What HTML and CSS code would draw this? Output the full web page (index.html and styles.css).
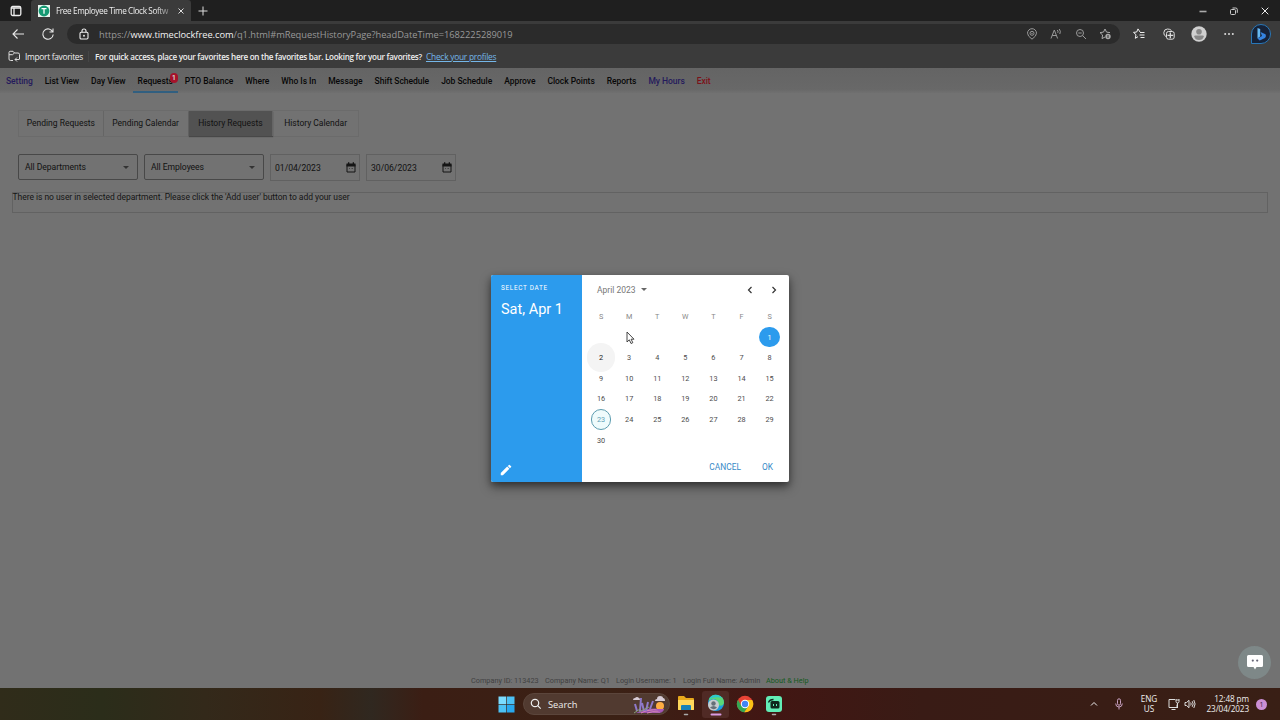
FILE: index.html
```html
<!DOCTYPE html>
<html lang="en">
<head>
  <meta charset="UTF-8" />
  <meta name="viewport" content="width=device-width, initial-scale=1.0"/>
  <title>Free Employee Time Clock Software</title>
  <link rel="stylesheet" href="styles.css">
</head>
<body>
  <!-- Browser -->
  <header class="browser">
    <div class="tabs">
      <svg class="tab-menu" width="12" height="12" viewBox="0 0 12 12" fill="none" stroke="#eee" stroke-width="1.3"><rect x="1.2" y="1.5" width="9.6" height="9" rx="1.5"/><path d="M1 3h10M4 3v7"/></svg>
      <div class="tab">
        <span class="favicon"><svg width="12" height="12" viewBox="0 0 12 12"><circle cx="6" cy="6" r="5.4" fill="#159a73"/><path d="M3.5 3.7h5M6 3.7v5" stroke="#fff" stroke-width="1.3"/></svg></span>
        <span class="tab-title">Free Employee Time Clock Softw</span>
        <svg class="tab-close" width="8" height="8" viewBox="0 0 8 8" stroke="#ddd" stroke-width="1"><path d="M1.5 1.5l5 5M6.5 1.5l-5 5"/></svg>
      </div>
      <svg class="new-tab" width="12" height="12" viewBox="0 0 12 12" stroke="#ddd" stroke-width="1"><path d="M1.5 6h9M6 1.5v9"/></svg>
      <div class="window-btns">
        <svg width="10" height="10" viewBox="0 0 10 10"><path d="M1.5 5.500h7" stroke="#aaa" stroke-width="1.6"/></svg>
        <svg width="10" height="10" viewBox="0 0 10 10" fill="none" stroke="#ccc"><rect x="1.5" y="3.5" width="5" height="5" rx="1"/><path d="M3.5 2h3.2q1.6 0 1.6 1.6v3.2"/></svg>
        <svg width="10" height="10" viewBox="0 0 10 10" stroke="#eee"><path d="M1.7 1.7l6.6 6.6M8.3 1.7l-6.6 6.6"/></svg>
      </div>
    </div>

    <div class="toolbar">
      <svg class="back" width="14" height="14" viewBox="0 0 14 14" fill="none" stroke="#e8e8e8" stroke-width="1.1"><path d="M13 7H2M6.5 2.5L2 7l4.500 4.500"/></svg>
      <svg class="reload" width="14" height="14" viewBox="0 0 14 14" fill="none" stroke="#e8e8e8" stroke-width="1.1"><path d="M11.8 5A5.200 5.200 0 1 0 12.200 7.500M12 1.500V5H8.500"/></svg>
      <div class="address">
        <svg class="lock" width="10" height="12" viewBox="0 0 10 12" fill="none" stroke="#eee" stroke-width="1.1"><rect x="1" y="4.300" width="8" height="6.700" rx="1.200"/><path d="M3 4.300V3a2 2 0 0 1 4 0v1.300"/><circle cx="5" cy="7.700" r=".4"/></svg>
        <span class="url">https://<b>www.timeclockfree.com</b>/q1.html#mRequestHistoryPage?headDateTime=1682225289019</span>
        <div class="address-icons">
          <svg width="12" height="12" viewBox="0 0 12 12" fill="none" stroke="#999"><path d="M6 11.200Q1.500 8 1.500 5.200a4.500 4.500 0 0 1 9 0Q10.500 8 6 11.200z"/><circle cx="6" cy="5.300" r="2"/><circle cx="6" cy="5.300" r=".3"/></svg>
          <svg width="12" height="12" viewBox="0 0 12 12" fill="none" stroke="#999"><path d="M1 10.500L4.300 2l3.300 8.500M2.200 7.500h4.200M7.300 2q1.200 1.200.5 2.800M9.200 1q2 2.200.6 5"/></svg>
          <svg width="12" height="12" viewBox="0 0 12 12" fill="none" stroke="#999"><circle cx="5" cy="5" r="3.500"/><path d="M7.600 7.600l3.400 3.400M3.300 5h3.400"/></svg>
          <svg width="12" height="12" viewBox="0 0 12 12" fill="none" stroke="#aaa"><path d="M6 9l-3 1.600.6-3.600L1 4.600l3.500-.5L6 1l1.500 3.100 3.500.5"/><circle cx="9" cy="8.500" r="2.700" fill="#aaa" stroke="none"/><path d="M9 7v3" stroke="#333"/></svg>
        </div>
      </div>
      <div class="toolbar-icons">
        <svg width="12" height="12" viewBox="0 0 12 12" fill="none" stroke="#eee"><path d="M7 4L5 .9 3.700 4l-3.200.4L3 6.700l-.7 3.600L5 8.700M7 4.500h4.500M6.500 7h5M7.500 9.500h4"/></svg>
        <svg width="12" height="12" viewBox="0 0 12 12" fill="none" stroke="#ddd"><path d="M3 8.500Q.7 7.500.8 4.700 1 1 4.500 1 7 1 8.500 2.500"/><rect x="3.500" y="3.500" width="7.700" height="7.700" rx="2"/><path d="M7.300 4.500v5.700M4.500 7.300h5.700" stroke-width="1.300"/></svg>
        <svg class="profile" width="16" height="16" viewBox="0 0 16 16"><circle cx="8" cy="8" r="7.700" fill="#d0d0d0"/><circle cx="8" cy="5.800" r="2.800" fill="#888"/><path d="M3.200 10.500q0-1 1-1h7.600q1 0 1 1-1 3.500-4.800 3.500T3.200 10.500z" fill="#888"/></svg>
        <svg class="more" width="12" height="12" viewBox="0 0 12 12" fill="#ddd"><circle cx="2.200" cy="6" r="1"/><circle cx="6" cy="6" r="1"/><circle cx="9.800" cy="6" r="1"/></svg>
        <svg class="bing" width="22" height="22" viewBox="0 0 22 22"><path d="M1.500 20.500V11A9.500 9.500 0 1 1 11 20.500z" fill="#162238" stroke="#2877b8"/><path d="M7.500 5l2.700 1v7.500l-2.700 2z" fill="#66b8f2"/><path d="M10.500 9l5 2.200q1.200 2.500-1 4L9.700 17.500l-2.200-2L12 13z" fill="#3583e0"/></svg>
      </div>
    </div>

    <div class="favorites">
      <svg width="13" height="12" viewBox="0 0 13 12" fill="none" stroke="#ddd"><path d="M5 10.500H2.500q-1.500 0-1.500-1.500V2.500Q1 1.300 2.200 1.300H5L6.500 3H10q1.500 0 1.500 1.500V9M1 4.700h3.500L6.500 3M11.500 9.500H7M9 7.500l-2 2 2 2"/></svg>
      <span class="import">Import favorites</span>
      <span class="hint">For quick access, place your favorites here on the favorites bar. Looking for your favorites?</span>
      <a href="#" class="profiles">Check your profiles</a>
    </div>
  </header>

  <!-- Time clock page -->
  <nav class="menu">
    <a class="blue">Setting</a>
    <a>List View</a>
    <a>Day View</a>
    <a class="active">Requests<span class="badge">1</span></a>
    <a>PTO Balance</a>
    <a>Where</a>
    <a>Who Is In</a>
    <a>Message</a>
    <a>Shift Schedule</a>
    <a>Job Schedule</a>
    <a>Approve</a>
    <a>Clock Points</a>
    <a>Reports</a>
    <a class="blue">My Hours</a>
    <a class="red">Exit</a>
  </nav>

  <main class="page">
    <div class="subtabs">
      <span>Pending Requests</span>
      <span>Pending Calendar</span>
      <span class="selected">History Requests</span>
      <span>History Calendar</span>
    </div>

    <div class="filters">
      <div class="select">All Departments<i></i></div>
      <div class="select">All Employees<i></i></div>
      <div class="date">01/04/2023<svg width="10" height="11" viewBox="0 0 10 11"><path d="M1 2.500h8v7.500H1z" fill="none" stroke="#151515"/><path d="M.5 1.500h9v3h-9zM2 .3h1.300v2H2zM6.700.3H8v2H6.700z" fill="#151515"/><path d="M3 6.500h1M5.500 6.500h1.500" stroke="#444"/></svg></div>
      <div class="date">30/06/2023<svg width="10" height="11" viewBox="0 0 10 11"><path d="M1 2.500h8v7.500H1z" fill="none" stroke="#151515"/><path d="M.5 1.500h9v3h-9zM2 .3h1.300v2H2zM6.700.3H8v2H6.700z" fill="#151515"/><path d="M3 6.500h1M5.500 6.500h1.500" stroke="#444"/></svg></div>
    </div>

    <div class="notice">There is no user in selected department. Please click the 'Add user' button to add your user</div>

    <footer class="company">
      <span class="c-id">Company ID: 113423</span>
      <span class="c-name">Company Name: Q1</span>
      <span class="c-user">Login Username: 1</span>
      <span class="c-full">Login Full Name: Admin</span>
      <span class="about">About &amp; Help</span>
    </footer>
  </main>

  <!-- Date picker -->
  <div class="picker">
    <div class="picker-side">
      <small>SELECT DATE</small>
      <h1>Sat, Apr 1</h1>
      <svg class="pencil" width="14" height="14" viewBox="0 0 24 24" fill="#fff"><path d="M3 17.250V21h3.750L17.810 9.940l-3.750-3.750L3 17.250zM20.710 7.040a1 1 0 0 0 0-1.410l-2.340-2.340a1 1 0 0 0-1.410 0l-1.830 1.830 3.750 3.750 1.830-1.830z"/></svg>
    </div>
    <div class="picker-main">
      <div class="month">
        <span>April 2023</span><i></i>
        <svg width="10" height="10" viewBox="0 0 10 10" fill="none" stroke="#333" stroke-width="1.200"><path d="M6.500 2L3.500 5l3 3"/></svg>
        <svg width="10" height="10" viewBox="0 0 10 10" fill="none" stroke="#333" stroke-width="1.200"><path d="M3.500 2l3 3-3 3"/></svg>
      </div>
      <div class="week"><span>S</span><span>M</span><span>T</span><span>W</span><span>T</span><span>F</span><span>S</span></div>
      <div class="days" id="days"></div>
      <div class="actions"><span>CANCEL</span><span>OK</span></div>
    </div>
  </div>

  <svg class="cursor" width="9" height="14" viewBox="0 0 9 14"><path d="M1 1v10l2.300-2.200L5 12.500l1.800-.8-1.700-3.500H8z" fill="#fff" stroke="#333" stroke-width=".9"/></svg>

  <div class="chat">
    <svg width="18" height="17" viewBox="0 0 18 17"><path d="M2.500 1h13Q17 1 17 2.500v9q0 1.500-1.500 1.500h-5L9 15.500 7.500 13h-5Q1 13 1 11.500v-9Q1 1 2.500 1z" fill="#fff"/><circle cx="6.800" cy="6.600" r="1.100" fill="#667"/><circle cx="11.200" cy="6.600" r="1.100" fill="#667"/></svg>
  </div>

  <!-- Taskbar -->
  <div class="taskbar">
    <div class="apps">
      <svg class="start" width="17" height="17" viewBox="0 0 17 17" fill="#4cc2f5"><rect x=".5" y=".5" width="7.700" height="7.700" fill="#7bdcff"/><rect x="8.800" y=".5" width="7.700" height="7.700"/><rect x=".5" y="8.800" width="7.700" height="7.700"/><rect x="8.800" y="8.800" width="7.700" height="7.700" fill="#28a8ee"/></svg>
      <div class="search">
        <svg width="12" height="12" viewBox="0 0 12 12" fill="none" stroke="#eee" stroke-width="1.200"><circle cx="5" cy="5" r="3.700"/><path d="M7.700 7.700l3 3"/></svg>
        <span>Search</span>
        <svg class="flowers" width="34" height="19" viewBox="0 0 34 19">
          <path d="M4 18q9-6 28-4-1 4-5 4z" fill="#9450ad"/><path d="M9 18q7-4 18-3M15 18q5-2 13-1" stroke="#dd8bb8" fill="none"/>
          <circle cx="28" cy="11" r="4" fill="#ffad42"/><path d="M24 14h8q-1 3-5 3z" fill="#a858b8"/>
          <path d="M23 6q0-2 2-2 0-3 3-3t3 2q2 0 2 3zM1 5q0-2 2-2 2-2 4 0 1 0 1 2z" fill="#d8ccd6"/>
          <path d="M5 16L3 9M8 16l1-13M12 16L10 8M14 16l2-9M18 14l3-8" stroke="#8e79c9" stroke-width="2"/>
          <path d="M2 18l6-4M7 17l10-5" stroke="#8aa17b"/>
        </svg>
      </div>
      <svg class="folder" width="18" height="24" viewBox="0 0 18 24"><path d="M1 5q0-1 1-1h5l2 2h7q1 0 1 1v11H1z" fill="#e8a91c"/><path d="M1 8h16v9q0 1-1 1H2q-1 0-1-1z" fill="#ffd75b"/><path d="M4 14q0-1 1-1h8q1 0 1 1v4H4z" fill="#1681b8"/><path d="M7.500 22.500h3" stroke="#aaa" stroke-width="1.500" stroke-linecap="round"/></svg>
      <div class="edge">
        <svg width="18" height="24" viewBox="0 0 18 24"><circle cx="9" cy="11" r="8" fill="#1b9de0"/><path d="M2 7q3-5 8-4 7 1 7 8-1 4-6 2 1-5-4-6-3 0-5 2z" fill="#5bd778"/><path d="M2 7q3-5 9-4 3 1 4 3Q9 4 2 7z" fill="#2ec8cd"/><circle cx="6.500" cy="13" r="5.500" fill="#c6cccf"/><circle cx="6.500" cy="11.500" r="2.200" fill="#667078"/><path d="M3 15.500q3.500-3 7 0-3 3.500-7 0z" fill="#667078"/><path d="M4.500 22.500h9" stroke="#d99be3" stroke-width="2" stroke-linecap="round"/></svg>
      </div>
      <svg class="chrome" width="18" height="18" viewBox="0 0 18 18"><circle cx="9" cy="9" r="8.200" fill="#e94335"/><path d="M2 4.800A8.200 8.200 0 0 0 8.500 17.200L12.500 11 5.500 11z" fill="#34a853"/><path d="M9 5h7.200A8.200 8.200 0 0 1 8.300 17.200L12.500 11z" fill="#fbc116"/><circle cx="9" cy="9" r="4.200" fill="#fff"/><circle cx="9" cy="9" r="3.200" fill="#4285f4"/></svg>
      <svg class="robot" width="18" height="24" viewBox="0 0 18 24"><rect x="1" y="4" width="16" height="16" rx="3" fill="#62edb6"/><rect x="5.500" y="9" width="9" height="7.500" rx="1.500" fill="#10271f"/><path d="M3.500 10.500q1-3 5-3" fill="none" stroke="#10271f" stroke-width="1.300"/><path d="M8.500 12v2M11.500 12v2" stroke="#62edb6"/><path d="M7.500 22.500h3" stroke="#aaa" stroke-width="1.500" stroke-linecap="round"/></svg>
    </div>
    <div class="tray">
      <svg width="8" height="8" viewBox="0 0 8 8" fill="none" stroke="#eee"><path d="M1 5.500l3-3 3 3"/></svg>
      <svg class="mic" width="8" height="12" viewBox="0 0 8 12" fill="none" stroke="#c7a0c0"><rect x="2.500" y=".8" width="3" height="6.400" rx="1.500"/><path d="M.7 5.500q0 3.500 3.300 3.500t3.300-3.500M4 9v2.500"/></svg>
      <div class="lang">ENG<br>US</div>
      <svg class="net" width="12" height="12" viewBox="0 0 12 12" fill="none" stroke="#ddd"><path d="M7 1.500H1v8h8V6.500M3.500 11.500h4M8 1v2.500q0 1.500 1.500 1.500T11 3.500V1M8 2h3M9.500 5v5"/></svg>
      <svg class="sound" width="12" height="12" viewBox="0 0 12 12" fill="none" stroke="#ddd"><path d="M1 4.500v3h1.500L5 9.700V2.300L2.500 4.500zM6.700 4.500q1 1.500 0 3M8.200 3.200q2 2.800 0 5.600M9.800 2q2.600 4 0 8"/></svg>
      <div class="clock">12:48 pm<br>23/04/2023</div>
      <span class="count">1</span>
    </div>
  </div>

  <script>
    // April 2023 starts on a Saturday
    const days = document.getElementById('days');

    for (let i = 1; i <= 30; i++) {
      const day = document.createElement('span');
      day.textContent = i;
      if (i === 1) day.classList.add('first', 'picked');
      if (i === 2) day.classList.add('hovered');
      if (i === 23) day.classList.add('today');
      days.appendChild(day);
    }
  </script>
</body>
</html>
```

FILE: styles.css
```css
* {
  margin: 0;
  padding: 0;
  box-sizing: border-box;
}

body {
  width: 1280px;
  height: 720px;
  overflow: hidden;
  position: relative;
  display: flex;
  flex-direction: column;
  background: #727272;
  color: #111;
  font-family: Roboto, sans-serif;
}

svg {
  display: block;
  flex-shrink: 0;
}

span, a, div {
  white-space: nowrap;
}

/* Browser */
.browser {
  height: 68px;
  background: #3b3b3b;
  color: #eee;
  font-family: "Open Sans", "Noto Sans", sans-serif;
}

.tabs {
  height: 21px;
  background: #1f1f1f;
  display: flex;
  align-items: center;
}

.tab-menu {
  margin-left: 10px;
}

.tab {
  width: 160px;
  height: 21px;
  margin-left: 9px;
  padding-left: 7px;
  display: flex;
  align-items: center;
  background: #3b3b3b;
  border-radius: 3px 3px 0 0;
}

.favicon {
  background: #e8f5ef;
}

.tab-title {
  width: 117px;
  margin-left: 6px;
  font-size: 8.2px;
  letter-spacing: -0.38px;
  -webkit-mask-image: linear-gradient(90deg, #000 85%, rgba(0, 0, 0, 0.2));
}

.tab-close {
  margin-left: 4px;
}

.new-tab {
  margin-left: 6px;
}

.window-btns {
  display: flex;
  gap: 21px;
  margin-left: auto;
  margin-right: 10px;
}

.toolbar {
  height: 26px;
  display: flex;
  align-items: center;
}

.back {
  margin-left: 11px;
}

.reload {
  margin-left: 16px;
}

.address {
  width: 1053px;
  height: 20px;
  margin-left: 12px;
  padding: 0 9px 0 12px;
  display: flex;
  align-items: center;
  background: #2b2b2b;
  border-radius: 10px;
}

.url {
  margin-left: 10px;
  font-size: 9.3px;
  letter-spacing: -0.03px;
  color: #999;
}

.url b {
  font-weight: 500;
  color: #f2f2f2;
}

.address-icons {
  display: flex;
  gap: 12.5px;
  margin-left: auto;
}

.toolbar-icons {
  display: flex;
  align-items: center;
  margin-left: 13px;
}

.toolbar-icons svg + svg {
  margin-left: 18px;
}

.toolbar-icons .profile {
  margin-left: 16px !important;
}

.toolbar-icons .profile + .more {
  margin-left: 16px;
}

.toolbar-icons .bing {
  margin-left: 15px !important;
}

.favorites {
  height: 18px;
  padding-left: 8px;
  display: flex;
  align-items: center;
  font-size: 8.4px;
}

.import {
  width: 63px;
  margin-left: 4px;
  letter-spacing: -0.3px;
}

.hint {
  width: 332px;
  padding-left: 6px;
  border-left: 1px solid #464646;
  font-weight: 600;
  font-size: 8.1px;
  letter-spacing: -0.28px;
}

.profiles {
  color: #74b6e8;
  margin-left: 6px;
  letter-spacing: -0.25px;
}

/* Menu */
.menu {
  height: 25px;
  padding: 0 6px;
  display: flex;
  gap: 12px;
  background: linear-gradient(#646464, #686868 85%, #707070);
  font-size: 8.5px;
  font-weight: 500;
  line-height: 26px;
  letter-spacing: -0.04px;
  color: #080808;
}

.menu .blue {
  color: #241a5c;
}

.menu .red {
  color: #7d1018;
}

.menu .active {
  position: relative;
  border-bottom: 2px solid #315f80;
  padding: 0 5px;
  margin: 0 -5px;
}

.badge {
  position: absolute;
  right: 0;
  top: 5px;
  width: 8px;
  height: 10px;
  border-radius: 4px;
  background: #a5132b;
  color: #ddd;
  font-size: 7.5px;
  line-height: 10px;
  text-align: center;
}

/* Page */
.page {
  height: 595px;
  padding: 17px 12px 1px;
  display: flex;
  flex-direction: column;
}

.subtabs {
  display: flex;
  width: 341px;
  height: 27px;
  margin-left: 6px;
  border: 1px solid #6b6b6b;
  font-size: 8.5px;
  line-height: 25px;
}

.subtabs span {
  width: 85px;
  text-align: center;
  border-right: 1px solid #656565;
}

.subtabs span:last-child {
  border: 0;
}

.subtabs .selected {
  background: #525252;
  box-shadow: 0 1px 1px #484848;
}

.filters {
  display: flex;
  gap: 6px;
  margin: 17px 0 0 6px;
  font-size: 8.6px;
  letter-spacing: -0.05px;
}

.select {
  width: 120px;
  height: 26px;
  padding: 0 8px 0 6px;
  display: flex;
  align-items: center;
  justify-content: space-between;
  border: 1px solid #484848;
  border-radius: 2px;
}

.select i {
  border: 3px solid transparent;
  border-top-color: #333;
  border-bottom: 0;
}

.date {
  width: 90px;
  height: 27px;
  padding: 0 3px 0 4px;
  display: flex;
  align-items: center;
  justify-content: space-between;
  border: 1px solid #616161;
  letter-spacing: 0;
}

.notice {
  height: 21px;
  margin-top: 11px;
  border: 1px solid #626262;
  font-size: 8.5px;
  line-height: 9px;
  letter-spacing: -0.04px;
  text-indent: -0.5px;
  color: #151515;
}

.company {
  margin-top: auto;
  margin-left: 459px;
  display: flex;
  height: 12px;
  font-size: 7.3px;
  line-height: 12px;
  color: #414141;
}

.c-id { width: 74px; }
.c-name { width: 71px; }
.c-user { width: 67px; }
.c-full { width: 83px; }

.about {
  color: #145a1e;
}

/* Date picker */
.picker {
  position: absolute;
  left: 491px;
  top: 275px;
  width: 298px;
  height: 207px;
  display: flex;
  background: #fff;
  border-radius: 2px;
  overflow: hidden;
  box-shadow: 0 5px 12px rgba(0, 0, 0, 0.4), 0 3px 6px rgba(0, 0, 0, 0.3);
}

.picker-side {
  width: 91px;
  padding: 8px 10px;
  display: flex;
  flex-direction: column;
  background: #2c9bed;
  color: #fff;
}

.picker-side small {
  font-size: 6.4px;
  line-height: 10px;
  letter-spacing: 0.7px;
}

.picker-side h1 {
  margin-top: 7px;
  font-size: 14.5px;
  font-weight: 400;
  line-height: 20px;
  white-space: nowrap;
}

.pencil {
  margin-top: auto;
  margin-left: -2px;
  margin-bottom: -3px;
}

.picker-main {
  width: 207px;
  padding: 7px 5px 0;
}

.month {
  height: 15px;
  display: flex;
  align-items: center;
  padding: 0 5px 0 10px;
  font-size: 8.5px;
  color: #777;
}

.month i {
  margin-left: 5px;
  margin-right: auto;
  border: 3px solid transparent;
  border-top-color: #666;
  border-bottom: 0;
}

.month svg + svg {
  margin-left: 14px;
}

.week, .days {
  display: grid;
  grid-template-columns: repeat(7, 28.1px);
  justify-items: center;
  font-size: 7.3px;
  text-align: center;
}

.week {
  margin-top: 14px;
  line-height: 11px;
  color: #888;
}

.days {
  margin-top: 4.6px;
  grid-auto-rows: 20.6px;
  color: #4c4c4c;
}

.days span {
  width: 20.6px;
  height: 20.6px;
  line-height: 22px;
  border-radius: 50%;
}

.days .first {
  grid-column: 7;
}

.days .picked {
  background: #2c9bed;
  color: #fff;
  line-height: 21px;
}

.days .hovered {
  background: #f4f4f4;
  box-shadow: 0 0 0 4px #f4f4f4;
  color: #222;
}

.days .today {
  border: 1px solid #5d9caf;
  line-height: 20px;
  color: #5fa2b7;
  background: #effbfc;
}

.actions {
  display: flex;
  justify-content: flex-end;
  gap: 21px;
  margin-top: 11px;
  padding-right: 11px;
  font-size: 8.4px;
  line-height: 12px;
  color: #378ac7;
}

.cursor {
  position: absolute;
  left: 626px;
  top: 331px;
}

.chat {
  position: absolute;
  left: 1238px;
  top: 646px;
  width: 33px;
  height: 33px;
  border-radius: 50%;
  background: #7e8888;
  display: flex;
  align-items: center;
  justify-content: center;
}

/* Taskbar */
.taskbar {
  height: 32px;
  display: flex;
  align-items: center;
  background: linear-gradient(90deg, #302c1a 0%, #2b2d1a 8%, #33291a 16%, #382315 25%, #302820 29%, #3b1e14 33%, #3b2115 48%, #421613 60%, #391b15 72%, #391f15 100%);
  color: #eee;
  font-family: "Open Sans", "Noto Sans", sans-serif;
}

.apps {
  display: flex;
  align-items: center;
  margin-left: 498px;
}

.search {
  width: 147px;
  height: 22px;
  margin-left: 8px;
  padding: 0 3px 0 6px;
  display: flex;
  align-items: center;
  background: #513a30;
  border: 1px solid #5b453b;
  border-radius: 11px;
  font-size: 9.3px;
}

.search span {
  margin-left: 6px;
}

.flowers {
  margin-left: auto;
}

.folder {
  margin-left: 7px;
}

.edge {
  width: 27px;
  height: 27px;
  margin-left: 7px;
  display: flex;
  align-items: center;
  justify-content: center;
  background: #502a25;
  border-radius: 3px;
}

.chrome {
  margin-left: 7px;
}

.robot {
  margin-left: 11px;
}

.tray {
  margin-left: auto;
  margin-right: 13px;
  display: flex;
  align-items: center;
  font-size: 8.2px;
  line-height: 10.5px;
  letter-spacing: -0.1px;
}

.mic {
  margin-left: 17px;
}

.lang {
  width: 20px;
  margin-left: 16px;
  text-align: center;
}

.net {
  margin-left: 9px;
}

.sound {
  margin-left: 4px;
}

.clock {
  width: 46px;
  margin-left: 7px;
  text-align: right;
}

.count {
  width: 11px;
  height: 11px;
  margin-left: 7px;
  border-radius: 50%;
  background: #cb8fd4;
  color: #402040;
  font-size: 7px;
  line-height: 11px;
  text-align: center;
}
```
